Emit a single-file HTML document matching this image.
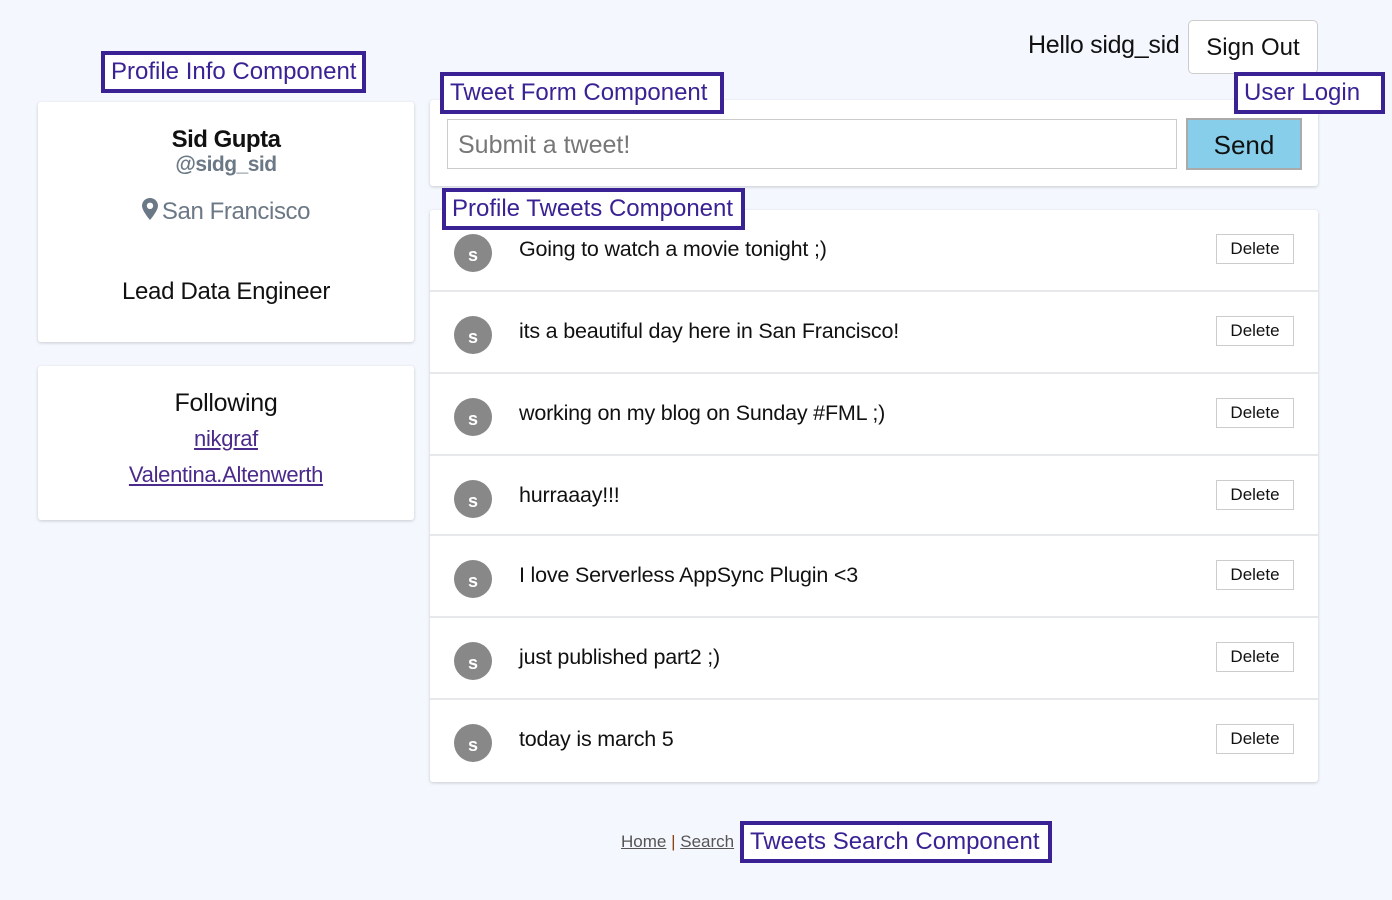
<!DOCTYPE html>
<html><head><meta charset="utf-8"><style>
body{margin:0;width:1392px;height:900px;background:#f4f7fe;font-family:"Liberation Sans",sans-serif;position:relative;overflow:hidden;color:#111}
.a{position:absolute}
.lbl{position:absolute;border:4px solid #3a2294;background:#fff;color:#3a2294;font-size:24px;line-height:30px;padding:0 6px;box-sizing:border-box;white-space:nowrap}
.card{position:absolute;background:#fff;border-radius:3px;box-shadow:0 1px 3px rgba(0,0,0,.18)}
.row{position:absolute;left:0;right:0;height:82px;border-bottom:2px solid #e6e8ec;box-sizing:border-box}
.av{position:absolute;left:24px;top:24px;width:38px;height:38px;border-radius:50%;background:#888;color:#fff;font-weight:bold;font-size:18px;text-align:center;line-height:42px}
.tx{position:absolute;left:89px;top:27px;font-size:21.5px;letter-spacing:-0.2px}
.del{position:absolute;left:786px;top:24px;width:78px;height:30px;border:1px solid #ccc;box-sizing:border-box;background:#fff;font-size:17px;text-align:center;line-height:28px}
a{color:#4a2a8a}
</style></head><body>
<div class="a" style="left:1028px;top:31px;font-size:25px;letter-spacing:-0.3px">Hello sidg_sid</div>
<div class="a" style="left:1188px;top:20px;width:130px;height:54px;border:1px solid #ccc;border-radius:5px;background:#fff;box-sizing:border-box;font-size:24px;text-align:center;line-height:54px">Sign Out</div>

<div class="card" style="left:38px;top:102px;width:376px;height:240px">
<div class="a" style="left:0;right:0;top:24px;text-align:center;font-size:24px;font-weight:bold;letter-spacing:-0.5px">Sid Gupta</div>
<div class="a" style="left:0;right:0;top:51px;text-align:center;font-size:21px;font-weight:bold;color:#6b7885;letter-spacing:-0.5px">@sidg_sid</div>
<div class="a" style="left:0;right:0;top:96px;text-align:center;font-size:24px;color:#6b7885;letter-spacing:-0.4px"><svg width="16" height="22" viewBox="0 0 16 22" style="vertical-align:-1px;margin-right:4px"><path d="M8 0C3.6 0 0 3.4 0 7.8 0 13 8 22 8 22s8-9 8-14.2C16 3.4 12.4 0 8 0zm0 11a3.2 3.2 0 1 1 0-6.4A3.2 3.2 0 0 1 8 11z" fill="#6b7885"/></svg>San Francisco</div>
<div class="a" style="left:0;right:0;top:176px;text-align:center;font-size:24px;letter-spacing:-0.3px">Lead Data Engineer</div>
</div>
<div class="lbl" style="left:101px;top:51px;width:265px;height:42px;line-height:34px">Profile Info Component</div>

<div class="card" style="left:38px;top:366px;width:376px;height:154px">
<div class="a" style="left:0;right:0;top:23px;text-align:center;font-size:25px;letter-spacing:-0.3px">Following</div>
<div class="a" style="left:0;right:0;top:60px;text-align:center;font-size:22px;letter-spacing:-0.3px"><a href="#">nikgraf</a></div>
<div class="a" style="left:0;right:0;top:96px;text-align:center;font-size:22px;letter-spacing:-0.3px"><a href="#">Valentina.Altenwerth</a></div>
</div>

<div class="card" style="left:430px;top:100px;width:888px;height:86px">
<div class="a" style="left:17px;top:19px;width:730px;height:50px;border:1px solid #ccc;box-sizing:border-box;font-size:25px;color:#777;line-height:50px;padding-left:10px">Submit a tweet!</div>
<div class="a" style="left:756px;top:18px;width:116px;height:52px;background:#87ceea;border:2px solid #aaa;box-sizing:border-box;font-size:26px;text-align:center;line-height:50px">Send</div>
</div>
<div class="lbl" style="left:440px;top:72px;width:284px;height:42px;line-height:34px">Tweet Form Component</div>
<div class="lbl" style="left:1234px;top:72px;width:151px;height:42px;line-height:34px">User Login</div>

<div class="card" style="left:430px;top:210px;width:888px;height:572px">
<div class="row" style="top:0"><div class="av">s</div><div class="tx">Going to watch a movie tonight ;)</div><div class="del">Delete</div></div>
<div class="row" style="top:82px"><div class="av">s</div><div class="tx">its a beautiful day here in San Francisco!</div><div class="del">Delete</div></div>
<div class="row" style="top:164px"><div class="av">s</div><div class="tx">working on my blog on Sunday #FML ;)</div><div class="del">Delete</div></div>
<div class="row" style="top:246px;height:80px"><div class="av">s</div><div class="tx">hurraaay!!!</div><div class="del">Delete</div></div>
<div class="row" style="top:326px"><div class="av">s</div><div class="tx">I love Serverless AppSync Plugin &lt;3</div><div class="del">Delete</div></div>
<div class="row" style="top:408px"><div class="av">s</div><div class="tx">just published part2 ;)</div><div class="del">Delete</div></div>
<div class="row" style="top:490px;border:none"><div class="av">s</div><div class="tx">today is march 5</div><div class="del">Delete</div></div>
</div>
<div class="lbl" style="left:442px;top:188px;width:303px;height:42px;line-height:34px">Profile Tweets Component</div>

<div class="a" style="left:621px;top:832px;font-size:17px;color:#555;white-space:nowrap"><a href="#" style="color:#555">Home</a><span style="color:#8b4513"> | </span><a href="#" style="color:#555">Search</a></div>
<div class="lbl" style="left:740px;top:821px;width:312px;height:42px;line-height:34px;font-size:24px">Tweets Search Component</div>
</body></html>
